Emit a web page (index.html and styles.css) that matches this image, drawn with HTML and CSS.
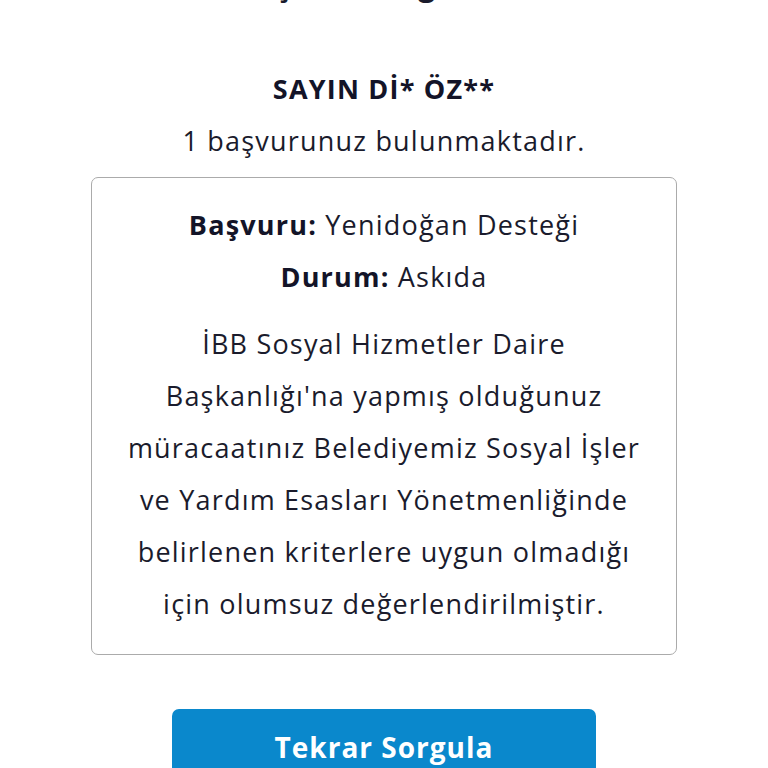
FILE: index.html
```html
<!DOCTYPE html>
<html lang="tr">
<head>
<meta charset="utf-8">
<link rel="stylesheet" href="styles.css">
</head>
<body>
<main class="page">
  <h1 class="title">Başvuru Sorgulama</h1>
  <p class="greet">SAYIN Dİ* ÖZ**</p>
  <p class="count">1 başvurunuz bulunmaktadır.</p>
  <section class="card">
    <p class="row"><b>Başvuru:</b> Yenidoğan Desteği</p>
    <p class="row"><b>Durum:</b> Askıda</p>
    <p class="msg">İBB Sosyal Hizmetler Daire<br>Başkanlığı'na yapmış olduğunuz<br>müracaatınız Belediyemiz Sosyal İşler<br>ve Yardım Esasları Yönetmenliğinde<br>belirlenen kriterlere uygun olmadığı<br>için olumsuz değerlendirilmiştir.</p>
  </section>
  <button class="btn">Tekrar Sorgula</button>
</main>
</body>
</html>
```
FILE: styles.css
```css
html, body { margin: 0; padding: 0; background: #fff; }
body { font-family: "Open Sans", "Noto Sans", sans-serif; color: #1a1b2c; overflow: hidden; letter-spacing: 1.2px; }
.page { display: flex; flex-direction: column; align-items: center; text-align: center; }
.title { margin: -35px 0 0; font-size: 30px; line-height: 40px; font-weight: 700; height: 40px; letter-spacing: 0; }
.greet { margin: 58px 0 0; font-size: 27px; line-height: 52px; font-weight: 700; color: #131428; }
.count { margin: 0; font-size: 27px; line-height: 52px; }
.card { box-sizing: border-box; width: 586px; margin-top: 10px; border: 1.5px solid #ababab; border-radius: 7px; padding: 21px 6px 24px; }
.row { margin: 0; font-size: 27px; line-height: 52px; }
.row b { font-weight: 700; color: #131428; }
.msg { margin: 15px 0 0; font-size: 27px; line-height: 52px; }
.btn { margin-top: 54px; width: 424px; height: 82px; border: 0; border-radius: 7px; background: #0a88cc; color: #fff; font-family: inherit; font-size: 28px; font-weight: 700; letter-spacing: 1px; padding: 0 0 6px; }
```
